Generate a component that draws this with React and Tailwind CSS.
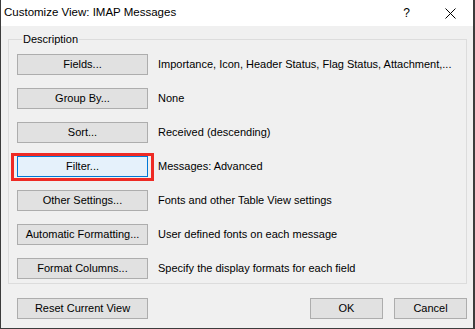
import React from "react"

const rows = [
  { label: "Fields...", desc: "Importance, Icon, Header Status, Flag Status, Attachment,..." },
  { label: "Group By...", desc: "None" },
  { label: "Sort...", desc: "Received (descending)" },
  { label: "Filter...", desc: "Messages: Advanced", focused: true },
  { label: "Other Settings...", desc: "Fonts and other Table View settings" },
  { label: "Automatic Formatting...", desc: "User defined fonts on each message" },
  { label: "Format Columns...", desc: "Specify the display formats for each field" },
]

function WinButton({ children, focused, className = "" }) {
  return (
    <button
      className={
        "h-[21px] border text-[11px] leading-none text-black flex items-center justify-center " +
        (focused ? "bg-[#e5f1fb] border-[#0078d7] " : "bg-[#e1e1e1] border-[#adadad] ") +
        className
      }
    >
      {children}
    </button>
  )
}

export default function App() {
  return (
    <div
      className="w-[475px] h-[329px] bg-[#3c3c3c] overflow-hidden"
      style={{ fontFamily: '"Liberation Sans", Arial, sans-serif' }}
    >
      <div className="ml-px w-[472px] h-[328px] bg-[#f0f0f0] flex flex-col">
        {/* title bar */}
        <div className="h-[26px] bg-white flex items-center pl-[3px] text-black">
          <span className="text-[11.5px]">Customize View: IMAP Messages</span>
          <span className="ml-auto text-[12px] mr-[35px]">?</span>
          <svg width="11" height="11" viewBox="0 0 11 11" className="mr-[17px]">
            <path d="M0.5 0.5 L10.5 10.5 M10.5 0.5 L0.5 10.5" stroke="#000" strokeWidth="1" />
          </svg>
        </div>

        {/* description group */}
        <fieldset className="mt-[7px] ml-[7px] w-[459px] border border-[#dcdcdc] pl-[8px] pr-[4px] pt-[8px] pb-[4px]">
          <legend className="ml-[5px] px-[1px] text-[11px] leading-[13px] text-black">Description</legend>
          <div className="flex flex-col gap-[13px]">
            {rows.map((r) => (
              <div key={r.label} className="flex items-center">
                <div className="relative">
                  {r.focused && (
                    <span className="absolute -left-[6px] -right-[6px] -top-[3px] -bottom-[4px] border-[3px] border-[#ee2a24] pointer-events-none" />
                  )}
                  <WinButton focused={r.focused} className="w-[131px]">
                    {r.label}
                  </WinButton>
                </div>
                <span className="ml-[10px] text-[11px] text-black whitespace-nowrap">{r.desc}</span>
              </div>
            ))}
          </div>
        </fieldset>

        {/* bottom buttons */}
        <div className="mt-[14px] flex items-center pl-[16px]">
          <WinButton className="w-[131px]">Reset Current View</WinButton>
          <WinButton className="w-[73px] ml-auto">OK</WinButton>
          <WinButton className="w-[73px] ml-[11px] mr-[6px]">Cancel</WinButton>
        </div>
      </div>
    </div>
  )
}
